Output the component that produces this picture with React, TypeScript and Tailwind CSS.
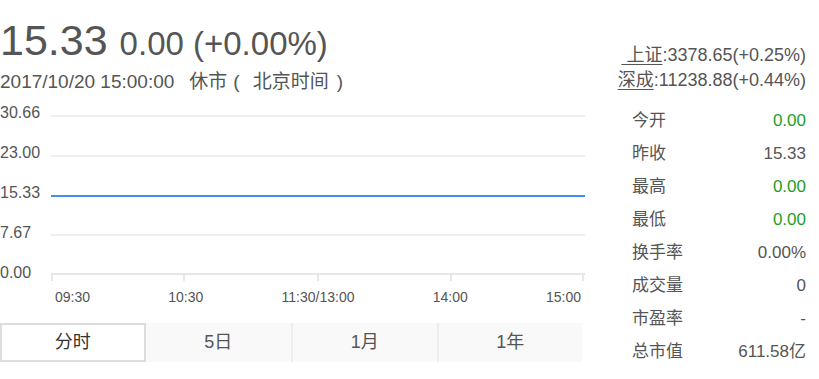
import React from "react";

const stats = [
  { label: "今开", value: "0.00", green: true },
  { label: "昨收", value: "15.33" },
  { label: "最高", value: "0.00", green: true },
  { label: "最低", value: "0.00", green: true },
  { label: "换手率", value: "0.00%" },
  { label: "成交量", value: "0" },
  { label: "市盈率", value: "-" },
  { label: "总市值", value: "611.58亿" },
];

const yLabels = ["30.66", "23.00", "15.33", "7.67", "0.00"];
const xLabels = ["09:30", "10:30", "11:30/13:00", "14:00", "15:00"];
const tabs = ["分时", "5日", "1月", "1年"];

function Chart() {
  // grid rows and ticks, in svg coords (svg sits at x=51)
  const grid = [13, 53, 132];
  const ticks = [1, 133, 267, 400, 532];
  return (
    <svg width="535" height="180" className="block">
      {grid.map((y) => (
        <line key={y} x1="0" x2="534" y1={y} y2={y} stroke="#eeeeee" strokeWidth="2" />
      ))}
      <line x1="0" x2="534" y1="171" y2="171" stroke="#e6e6e6" strokeWidth="2" />
      {ticks.map((x) => (
        <line key={x} x1={x} x2={x} y1="171" y2="178" stroke="#e6e6e6" strokeWidth="2" />
      ))}
      <line x1="0" x2="534" y1="93" y2="93" stroke="#4391e8" strokeWidth="2" />
    </svg>
  );
}

export default function App() {
  return (
    <div className="w-[819px] h-[379px] bg-white flex text-[#555] font-['Liberation_Sans','Noto_Sans_CJK_SC',sans-serif] overflow-hidden">
      {/* Left: quote + chart + tabs */}
      <div className="w-[600px] shrink-0">
        <div className="pt-[16px] flex items-baseline leading-[48px] whitespace-nowrap">
          <span className="text-[43px]">15.33</span>
          <span className="text-[33px] ml-[12px]">0.00 (+0.00%)</span>
        </div>
        <div className="mt-[2px] text-[19px] leading-[24px] whitespace-nowrap">
          <span>2017/10/20 15:00:00</span>
          <span className="ml-[15px]">休市</span>
          <span className="ml-[6px]">(</span>
          <span className="ml-[13px]">北京时间</span>
          <span className="ml-[8px]">)</span>
        </div>

        <div className="mt-[9px] flex">
          <div className="w-[51px] flex flex-col gap-[20px] text-[16px] leading-[20px]">
            {yLabels.map((l) => (
              <span key={l}>{l}</span>
            ))}
          </div>
          <Chart />
        </div>

        <div className="mt-[4px] ml-[55px] w-[526px] flex justify-between text-[14px] leading-[20px]">
          {xLabels.map((l) => (
            <span key={l}>{l}</span>
          ))}
        </div>

        <div className="mt-[16px] w-[582px] h-[39px] grid grid-cols-4 text-[18px]">
          {tabs.map((t, i) => (
            <div
              key={t}
              className={
                i === 0
                  ? "flex items-center justify-center bg-white border-2 border-[#dddddd] text-[#333]"
                  : i === 1
                    ? "flex items-center justify-center bg-[#f9f9f9]"
                    : "flex items-center justify-center bg-[#f9f9f9] border-l-2 border-[#eeeeee]"
              }
            >
              {t}
            </div>
          ))}
        </div>
      </div>

      {/* Right: index quotes + stats */}
      <div className="w-[206px] shrink-0 pt-[43px]">
        <div className="text-right text-[18px] whitespace-nowrap">
          <div className="h-[25px] leading-[25px]">
            <span className="underline underline-offset-[3px]">{"\u00a0上证"}</span>:3378.65(+0.25%)
          </div>
          <div className="h-[25px] leading-[25px]">
            <span className="underline underline-offset-[3px]">深成</span>:11238.88(+0.44%)
          </div>
        </div>

        <div className="mt-[11px] pl-[32px] text-[17px]">
          {stats.map((s) => (
            <div key={s.label} className="h-[33px] flex items-center justify-between whitespace-nowrap">
              <span>{s.label}</span>
              <span className={s.green ? "text-[#1e9e1e]" : ""}>{s.value}</span>
            </div>
          ))}
        </div>
      </div>
    </div>
  );
}
